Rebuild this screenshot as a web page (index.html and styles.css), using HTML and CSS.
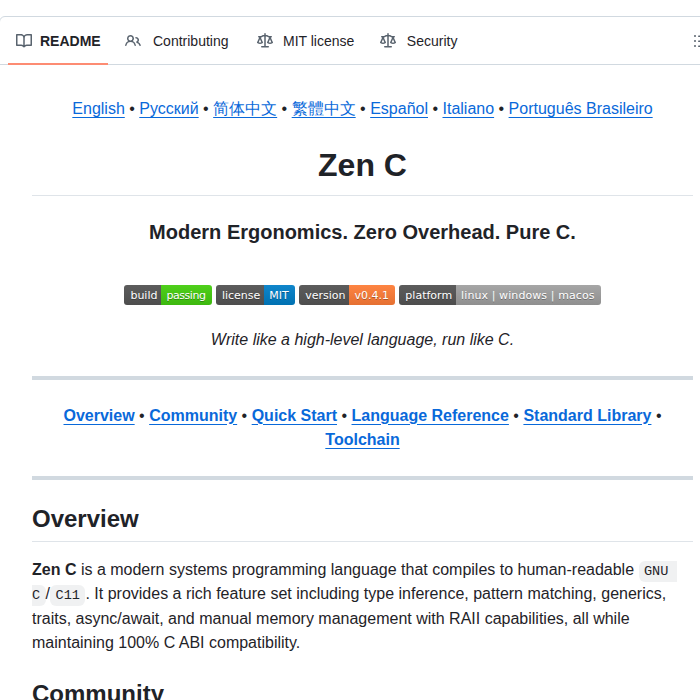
FILE: index.html
```html
<!DOCTYPE html>
<html lang="en">
<head>
  <meta charset="UTF-8" />
  <meta name="viewport" content="width=device-width, initial-scale=1.0" />
  <title>Zen C</title>
  <link rel="stylesheet" href="styles.css">
</head>
<body>
  <div class="readme-box">
    <nav class="tabs">
      <a class="tab tab-active">
        <svg class="tab-icon" viewBox="0 0 16 16"><path d="M0 1.75A.75.75 0 0 1 .75 1h4.253c1.227 0 2.317.59 3 1.501A3.743 3.743 0 0 1 11.006 1h4.245a.75.75 0 0 1 .75.75v10.5a.75.75 0 0 1-.75.75h-4.507a2.25 2.25 0 0 0-1.591.659l-.622.621a.75.75 0 0 1-1.06 0l-.622-.621A2.25 2.25 0 0 0 5.258 13H.75a.75.75 0 0 1-.75-.75Zm7.251 10.324.004-5.073-.002-2.253A2.25 2.25 0 0 0 5.003 2.5H1.5v9h3.757a3.75 3.75 0 0 1 1.994.574ZM8.755 4.75l-.004 7.322a3.752 3.752 0 0 1 1.992-.572H14.5v-9h-3.495a2.25 2.25 0 0 0-2.25 2.25Z"/></svg>
        README
      </a>
      <a class="tab tab-people">
        <svg class="tab-icon" viewBox="0 0 16 16"><path d="M2 5.5a3.5 3.5 0 1 1 5.898 2.549 5.508 5.508 0 0 1 3.034 4.084.75.75 0 1 1-1.482.235 4 4 0 0 0-7.9 0 .75.75 0 0 1-1.482-.236A5.507 5.507 0 0 1 3.102 8.05 3.493 3.493 0 0 1 2 5.5ZM11 4a3.001 3.001 0 0 1 2.22 5.018 5.01 5.01 0 0 1 2.56 3.012.749.749 0 0 1-.885.954.752.752 0 0 1-.549-.514 3.507 3.507 0 0 0-2.522-2.372.75.75 0 0 1-.574-.73v-.352a.75.75 0 0 1 .416-.672A1.5 1.5 0 0 0 11 5.5.75.75 0 0 1 11 4Zm-5.5-.5a2 2 0 1 0-.001 3.999A2 2 0 0 0 5.5 3.5Z"/></svg>
        Contributing
      </a>
      <a class="tab tab-law tab-license">
        <svg class="tab-icon" viewBox="0 0 16 16"><path d="M8.75.75V2h.985c.304 0 .603.08.867.231l1.29.736c.038.022.08.033.124.033h2.234a.75.75 0 0 1 0 1.5h-.427l2.111 4.692a.75.75 0 0 1-.154.838l-.53-.53.529.531-.001.002-.002.002-.006.006-.006.005-.01.01-.045.04c-.21.176-.441.327-.686.45C14.556 10.78 13.88 11 13 11a4.498 4.498 0 0 1-2.023-.454 3.544 3.544 0 0 1-.686-.45l-.045-.04-.016-.015-.006-.006-.004-.004v-.001a.75.75 0 0 1-.154-.838L12.178 4.5h-.162c-.305 0-.604-.079-.868-.231l-1.29-.736a.245.245 0 0 0-.124-.033H8.75V13h2.5a.75.75 0 0 1 0 1.5h-6.5a.75.75 0 0 1 0-1.5h2.5V3.5h-.984a.245.245 0 0 0-.124.033l-1.289.737c-.265.15-.564.23-.869.23h-.162l2.112 4.692a.75.75 0 0 1-.154.838l-.53-.53.529.531-.001.002-.002.002-.006.006-.016.015-.045.04c-.21.176-.441.327-.686.45C4.556 10.78 3.88 11 3 11a4.498 4.498 0 0 1-2.023-.454 3.544 3.544 0 0 1-.686-.45l-.045-.04-.016-.015-.006-.006-.004-.004v-.001a.75.75 0 0 1-.154-.838L2.178 4.5H1.75a.75.75 0 0 1 0-1.5h2.234a.249.249 0 0 0 .125-.033l1.288-.737c.265-.15.564-.23.869-.23h.984V.75a.75.75 0 0 1 1.5 0Zm2.945 8.477c.285.135.718.273 1.305.273s1.02-.138 1.305-.273L13 6.327Zm-10 0c.285.135.718.273 1.305.273s1.02-.138 1.305-.273L3 6.327Z"/></svg>
        MIT license
      </a>
      <a class="tab tab-law">
        <svg class="tab-icon" viewBox="0 0 16 16"><path d="M8.75.75V2h.985c.304 0 .603.08.867.231l1.29.736c.038.022.08.033.124.033h2.234a.75.75 0 0 1 0 1.5h-.427l2.111 4.692a.75.75 0 0 1-.154.838l-.53-.53.529.531-.001.002-.002.002-.006.006-.006.005-.01.01-.045.04c-.21.176-.441.327-.686.45C14.556 10.78 13.88 11 13 11a4.498 4.498 0 0 1-2.023-.454 3.544 3.544 0 0 1-.686-.45l-.045-.04-.016-.015-.006-.006-.004-.004v-.001a.75.75 0 0 1-.154-.838L12.178 4.5h-.162c-.305 0-.604-.079-.868-.231l-1.29-.736a.245.245 0 0 0-.124-.033H8.75V13h2.5a.75.75 0 0 1 0 1.5h-6.5a.75.75 0 0 1 0-1.5h2.5V3.5h-.984a.245.245 0 0 0-.124.033l-1.289.737c-.265.15-.564.23-.869.23h-.162l2.112 4.692a.75.75 0 0 1-.154.838l-.53-.53.529.531-.001.002-.002.002-.006.006-.016.015-.045.04c-.21.176-.441.327-.686.45C4.556 10.78 3.88 11 3 11a4.498 4.498 0 0 1-2.023-.454 3.544 3.544 0 0 1-.686-.45l-.045-.04-.016-.015-.006-.006-.004-.004v-.001a.75.75 0 0 1-.154-.838L2.178 4.5H1.75a.75.75 0 0 1 0-1.5h2.234a.249.249 0 0 0 .125-.033l1.288-.737c.265-.15.564-.23.869-.23h.984V.75a.75.75 0 0 1 1.5 0Zm2.945 8.477c.285.135.718.273 1.305.273s1.02-.138 1.305-.273L13 6.327Zm-10 0c.285.135.718.273 1.305.273s1.02-.138 1.305-.273L3 6.327Z"/></svg>
        Security
      </a>
      <svg class="tab-icon outline-icon" viewBox="0 0 16 16"><path d="M5.75 2.5h8.5a.75.75 0 0 1 0 1.5h-8.5a.75.75 0 0 1 0-1.5Zm0 5h8.5a.75.75 0 0 1 0 1.5h-8.5a.75.75 0 0 1 0-1.5Zm0 5h8.5a.75.75 0 0 1 0 1.5h-8.5a.75.75 0 0 1 0-1.5ZM2 14a1 1 0 1 1 0-2 1 1 0 0 1 0 2Zm1-6a1 1 0 1 1-2 0 1 1 0 0 1 2 0ZM2 4a1 1 0 1 1 0-2 1 1 0 0 1 0 2Z"/></svg>
    </nav>

    <article class="markdown">
      <div class="center">
        <p>
          <a href="#">English</a> • <a href="#">Русский</a> • <a href="#">简体中文</a> • <a href="#">繁體中文</a> • <a href="#">Español</a> • <a href="#">Italiano</a> • <a href="#">Português Brasileiro</a>
        </p>
        <h1>Zen C</h1>
        <h3>Modern Ergonomics. Zero Overhead. Pure C.</h3>
        <p class="badges">
          <span class="badge"><span class="badge-key">build</span><span class="badge-val green">passing</span></span>
          <span class="badge"><span class="badge-key">license</span><span class="badge-val blue">MIT</span></span>
          <span class="badge"><span class="badge-key">version</span><span class="badge-val orange">v0.4.1</span></span>
          <span class="badge"><span class="badge-key">platform</span><span class="badge-val grey">linux | windows | macos</span></span>
        </p>
        <p><em>Write like a high-level language, run like C.</em></p>
      </div>
      <hr>
      <div class="center">
        <p>
          <a href="#"><strong>Overview</strong></a> • <a href="#"><strong>Community</strong></a> • <a href="#"><strong>Quick Start</strong></a> • <a href="#"><strong>Language Reference</strong></a> • <a href="#"><strong>Standard Library</strong></a> • <a href="#"><strong>Toolchain</strong></a>
        </p>
      </div>
      <hr>
      <h2>Overview</h2>
      <p><strong>Zen C</strong> is a modern systems programming language that compiles to human-readable <code>GNU C</code>/<code>C11</code>. It provides a rich feature set including type inference, pattern matching, generics, traits, async/await, and manual memory management with RAII capabilities, all while maintaining 100% C ABI compatibility.</p>
      <h2>Community</h2>
    </article>
  </div>
</body>
</html>
```

FILE: styles.css
```css
html, body {
  height: 100%;
  overflow: hidden;
}

body {
  margin: 0;
  background: #fff;
  color: #1f2328;
  font-family: "Liberation Sans", Arial, sans-serif;
  font-size: 16px;
  line-height: 1.5;
}

/* left border sits just off the page, right one is past the window */
.readme-box {
  box-sizing: border-box;
  width: 727px;
  margin: 16px 0 0 -1px;
  border: 1px solid #d1d9e0;
  border-radius: 6px;
}

/* Tabs */
.tabs {
  display: flex;
  align-items: center;
  height: 47px;
  padding-left: 8px;
  border-bottom: 1px solid #d1d9e0;
}

.tab {
  display: flex;
  align-items: center;
  gap: 8px;
  height: 100%;
  box-sizing: border-box;
  padding: 1px 8px 0;
  font-size: 14px;
  white-space: nowrap;
}

.tab-icon {
  width: 16px;
  height: 16px;
  fill: #59636e;
  flex-shrink: 0;
}

.tab-active {
  position: relative;
  width: 100px;
  font-weight: 700;
}

.tab-active::after {
  content: "";
  position: absolute;
  left: 0;
  right: 0;
  bottom: -1px;
  height: 2px;
  background: #fd8c73;
}

.tab-people {
  gap: 12px;
  margin-left: 9px;
}

.tab-law {
  gap: 10.5px;
  margin-left: 10px;
}

.tab-license {
  margin-left: 12px;
}

.outline-icon {
  margin-left: 228px;
}

/* Markdown body */
.markdown {
  padding: 32px;
}

.markdown a {
  color: #0969da;
  text-decoration: underline;
  text-underline-offset: 0.2rem;
}

.markdown p {
  margin: 0 0 16px;
}

.center {
  text-align: center;
}

h1, h2, h3 {
  margin: 24px 0 16px;
  font-weight: 600;
  line-height: 1.25;
}

h1, h2 {
  padding-bottom: 0.3em;
  border-bottom: 1px solid #d1d9e0b3;
}

h1 {
  font-size: 32px;
}

h2 {
  font-size: 24px;
}

h3 {
  font-size: 20px;
}

hr {
  height: 4px;
  margin: 24px 0;
  padding: 0;
  border: 0;
  background: #d1d9e0;
}

code {
  padding: 0.2em 0.4em;
  border-radius: 6px;
  background: #818b981f;
  font-family: "Liberation Mono", monospace;
  font-size: 85%;
  white-space: break-spaces;
}

/* Badges */
.markdown .badges {
  display: flex;
  justify-content: center;
  gap: 4.4px;
  margin-bottom: 16px;
  padding: 24px 0 7px;
}

.badge {
  display: flex;
  height: 20px;
  border-radius: 3px;
  overflow: hidden;
  font-family: "DejaVu Sans", sans-serif;
  font-size: 11px;
  line-height: 21px;
  color: #fff;
  text-shadow: 0 1px 0 rgba(1, 1, 1, 0.3);
}

.badge-key {
  padding: 0 4px 0 6px;
  background: linear-gradient(#5c5c5c, #4d4d4d);
}

.badge-val {
  padding: 0 6px 0 5px;
}

.green { background: linear-gradient(#4fd01b, #3db80f); letter-spacing: -0.45px; }
.blue { background: linear-gradient(#1086cb, #0071b2); }
.orange { background: linear-gradient(#fe8442, #e57032); }
.grey { background: linear-gradient(#a6a6a6, #8f8f8f); letter-spacing: 0.09px; }
```
